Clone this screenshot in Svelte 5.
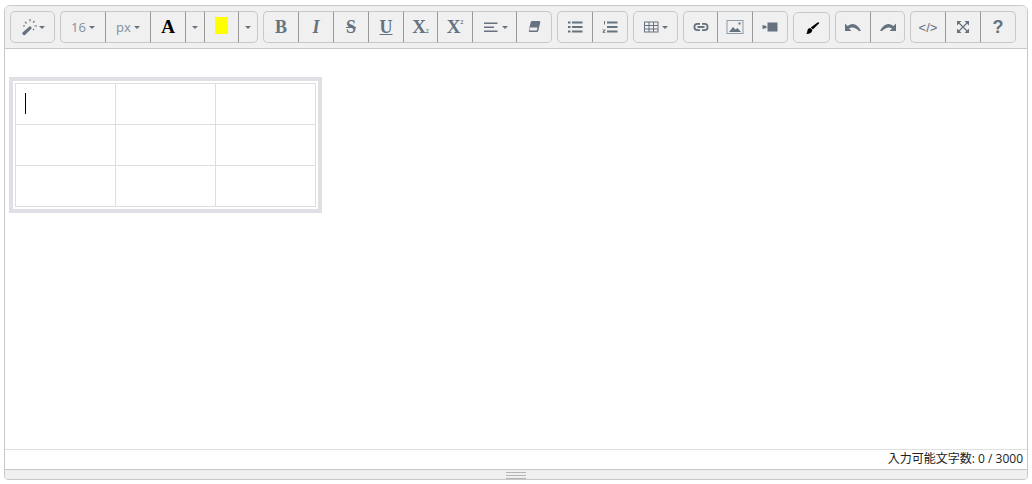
<script>
	// toolbar groups: each button has a width and the kind of icon it shows
	const groups = [
		[{ w: 45, icon: 'magic', caret: true }],
		[
			{ w: 46, label: '16', caret: true },
			{ w: 45, label: 'px', caret: true },
			{ w: 35, icon: 'fore' },
			{ w: 19, caret: true },
			{ w: 34, icon: 'back' },
			{ w: 19, caret: true }
		],
		[
			{ w: 36, glyph: 'B', cls: 'b' },
			{ w: 35, glyph: 'I', cls: 'i' },
			{ w: 35, glyph: 'S', cls: 's' },
			{ w: 35, glyph: 'U', cls: 'u' },
			{ w: 34, glyph: 'X', sub: '2', cls: 'x' },
			{ w: 35, glyph: 'X', sup: '2', cls: 'x' },
			{ w: 44, icon: 'align', caret: true },
			{ w: 35, icon: 'eraser' }
		],
		[
			{ w: 36, icon: 'ul' },
			{ w: 35, icon: 'ol' }
		],
		[{ w: 45, icon: 'table', caret: true }],
		[
			{ w: 35, icon: 'link' },
			{ w: 35, icon: 'picture' },
			{ w: 35, icon: 'video' }
		],
		[{ w: 37, icon: 'brush', low: true }],
		[
			{ w: 36, icon: 'undo' },
			{ w: 34, icon: 'redo' }
		],
		[
			{ w: 36, glyph: '</>', cls: 'code' },
			{ w: 35, icon: 'expand' },
			{ w: 35, glyph: '?', cls: 'help' }
		]
	];
	const rows = [0, 1, 2];
	const cols = [0, 1, 2];
</script>

{#snippet icon(name)}
	<svg class={name} width="18" height="18" viewBox="0 0 18 18" fill="currentColor">
		{#if name === 'magic'}
			<path d="M1.500 14.500l7.500-6.500 2 2-7 7q-1 .6-2-.2t-.5-2.300z" />
			<path d="M4 4l1.500 1.500M9 1v2.500M13.500 3l-1.500 1.500M16 8h-2.500M13 12l-1-1M2 8h2" stroke="currentColor" stroke-width="1.100" fill="none" />
		{:else if name === 'align'}
			<path d="M2 4.500h13.500v1.600H2zM2 8.500h10V10H2zM2 12.500h13.500v1.600H2z" />
		{:else if name === 'eraser'}
			<path d="M7 3h7.500q1 0 .8 1.200l-2 8.500q-.3 1.300-1.600 1.300H5q-1.500 0-1.200-1.500l2-8.500Q6 3 7 3zM5 9.500l-.7 3h7.500l.7-3z" fill-rule="evenodd" />
		{:else if name === 'ul'}
			<path d="M2 3.500h2.500v2H2zM6 3.500h10.500v2H6zM2 8h2.500v2H2zM6 8h10.500v2H6zM2 12.500h2.500v2H2zM6 12.500h10.500v2H6z" />
		{:else if name === 'ol'}
			<path d="M6 3.500h10.500v2H6zM6 8h10.500v2H6zM6 12.500h10.500v2H6zM3 3h1v3.500H3zM1.500 11.500h3v.8L3 14h1.500v.8h-3V14l1.600-1.700h-1.600z" />
		{:else if name === 'table'}
			<path d="M0 3.500h14.500v11H0zM1 4.500v2.500h3.500V4.500zm4.500 0v2.500h3.500V4.500zm4.500 0v2.500h3.500V4.500zM1 8v2.500h3.500V8zm4.500 0v2.500h3.500V8zM10 8v2.500h3.500V8zM1 11.500v2h3.500v-2zm4.500 0v2h3.500v-2zm4.500 0v2h3.500v-2z" fill-rule="evenodd" />
		{:else if name === 'link'}
			<path d="M8 5H5.500a4 4 0 0 0 0 8H8v-1.800H5.500a2.200 2.200 0 0 1 0-4.400H8zM10 5h2.500a4 4 0 0 1 0 8H10v-1.800h2.500a2.200 2.200 0 0 0 0-4.400H10zM5.500 8.100h7v1.800h-7z" />
		{:else if name === 'picture'}
			<path d="M.5 2h17v14H.5zM1.500 3v12h15V3z" fill-rule="evenodd" fill="#8d9aa8" />
			<path d="M3 14l4-5 2.500 2.500 2-1.500 3.500 4zM12.500 4.500h2v2h-2z" />
		{:else if name === 'video'}
			<path d="M6.500 4.500H16.500v9H6.500zM1.500 7L5.500 8v2l-4 1z" />
		{:else if name === 'brush'}
			<path d="M14.500 3.500q1-.7 1.500 0t-.3 1.300L9.800 10.500l-2-2zM7.300 9l2 2q-.2 3.800-6.300 4 1.300-.8 1.300-2.800.2-2.800 3-3.200z" />
		{:else if name === 'undo'}
			<path d="M1 5.500V13h6.500L5 10.500Q9.500 7.500 15 13h2Q11.500 2.500 3.500 8z" />
		{:else if name === 'redo'}
			<path d="M17 5.500V13h-6.500l2.500-2.500Q8.500 7.500 3 13H1Q6.500 2.500 14.500 8z" />
		{:else if name === 'expand'}
			<path d="M3 3h4.500L3 7.500zM15 3v4.500L10.500 3zM3 15v-4.500L7.500 15zM15 15h-4.500l4.500-4.500z" />
			<path d="M4 4l10 10M14 4L4 14" stroke="currentColor" stroke-width="1.200" fill="none" />
		{/if}
	</svg>
{/snippet}

<div class="editor">
	<div class="toolbar">
		{#each groups as group}
			<div class="group">
				{#each group as btn}
					<button class:low={btn.low} style="width: {btn.w}px">
						{#if btn.icon === 'fore'}
							<span class="fore">A</span>
						{:else if btn.icon === 'back'}
							<span class="swatch"></span>
						{:else if btn.icon}
							{@render icon(btn.icon)}
						{/if}
						{#if btn.label}<span class="label">{btn.label}</span>{/if}
						{#if btn.glyph}
							<span class="glyph {btn.cls}">{btn.glyph}{#if btn.sub}<sub>{btn.sub}</sub>{/if}{#if btn.sup}<sup>{btn.sup}</sup>{/if}</span>
						{/if}
						{#if btn.caret}<span class="caret"></span>{/if}
					</button>
				{/each}
			</div>
		{/each}
	</div>

	<div class="body">
		<div class="frame">
			<table>
				<tbody>
					{#each rows as r}
						<tr>
							{#each cols as c}
								<td>{#if r === 0 && c === 0}<span class="cursor"></span>{/if}</td>
							{/each}
						</tr>
					{/each}
				</tbody>
			</table>
		</div>
	</div>

	<div class="status">入力可能文字数: 0 / 3000</div>
	<div class="resize">
		<span class="grip"></span>
	</div>
</div>

<style>
	:global(body) {
		margin: 0;
		background: #fff;
	}

	.editor {
		box-sizing: border-box;
		width: 1024px;
		height: 475px;
		margin: 5px 0 0 4px;
		display: flex;
		flex-direction: column;
		border: 1px solid #c8c8c8;
		border-radius: 6px 6px 4px 4px;
		font-family: 'Open Sans', 'Noto Sans CJK JP', sans-serif;
		overflow: hidden;
	}

	.toolbar {
		display: flex;
		gap: 5px;
		height: 43px;
		flex: none;
		box-sizing: border-box;
		padding: 5px 5px 0;
		background: #f0f0f0;
		border-bottom: 1px solid #c8c8c8;
	}

	.group {
		display: flex;
		align-self: flex-start;
		height: 32px;
	}

	button {
		box-sizing: border-box;
		height: 32px;
		padding: 0;
		display: flex;
		align-items: center;
		justify-content: center;
		gap: 2px;
		background: #f0f0f0;
		border: 1px solid #c8c8c8;
		border-left-width: 0;
		color: #66727f;
		font-family: inherit;

		&:first-child {
			border-left-width: 1px;
			border-radius: 5px 0 0 5px;
		}
		&:last-child {
			border-radius: 0 5px 5px 0;
		}
		&:only-child {
			border-radius: 5px;
		}
		&:not(:last-child) {
			border-right-color: #999;
		}
		&.low {
			height: 31px;
			margin-top: 1px;
			color: #000;
		}
	}

	svg.magic,
	svg.table {
		margin-right: -2px;
	}

	.label {
		font-size: 13px;
		color: #7f8fa3;
		margin-right: 1px;
	}

	.caret {
		width: 0;
		height: 0;
		border-top: 3px solid #66727f;
		border-left: 3px solid transparent;
		border-right: 3px solid transparent;
	}

	.fore {
		font: bold 19px 'Liberation Serif', serif;
		color: #000;
	}

	.swatch {
		width: 13px;
		height: 17px;
		margin-bottom: 3px;
		background: #ff0;
	}

	.glyph {
		font: bold 18px 'Liberation Serif', serif;
		color: #66727f;

		&.i {
			font-style: italic;
		}
		&.s {
			text-decoration: line-through;
		}
		&.u {
			text-decoration: underline;
		}
		&.x {
			font-size: 19px;
		}
		&.code {
			font: 13px 'Liberation Sans', sans-serif;
		}
		&.help {
			font: bold 18px 'Liberation Sans', sans-serif;
		}
		& sub,
		& sup {
			font-size: 6px;
			line-height: 0;
			vertical-align: baseline;
			position: relative;
		}
		& sup {
			top: -9px;
		}
	}

	.body {
		flex: 1;
		padding: 28px 0 0 4px;
		background: #fff;
	}

	.frame {
		box-sizing: border-box;
		width: 313px;
		height: 136px;
		padding: 2px;
		border: 4px solid #dee0e6;
	}

	table {
		border-collapse: collapse;
		width: 301px;
		table-layout: fixed;
	}

	td {
		height: 40px;
		box-sizing: content-box;
		padding: 0;
		border: 1px solid #dedede;
		vertical-align: top;
	}

	.cursor {
		display: block;
		width: 1px;
		height: 21px;
		margin: 9px 0 0 9px;
		background: #000;
	}

	.status {
		flex: none;
		height: 20px;
		box-sizing: border-box;
		padding-right: 4px;
		border-top: 1px solid #e0e0e0;
		background: #fff;
		color: #222;
		font-size: 12px;
		line-height: 18px;
		text-align: right;
	}

	.resize {
		flex: none;
		height: 10px;
		box-sizing: border-box;
		display: flex;
		justify-content: center;
		padding-top: 2px;
		background: #f0f0f0;
		border-top: 1px solid #c8c8c8;
	}

	.grip {
		width: 20px;
		height: 5px;
		border-top: 1px solid #b5b5b5;
		border-bottom: 1px solid #b5b5b5;
		background: linear-gradient(#b5b5b5, #b5b5b5) center / 100% 1px no-repeat;
	}
</style>
